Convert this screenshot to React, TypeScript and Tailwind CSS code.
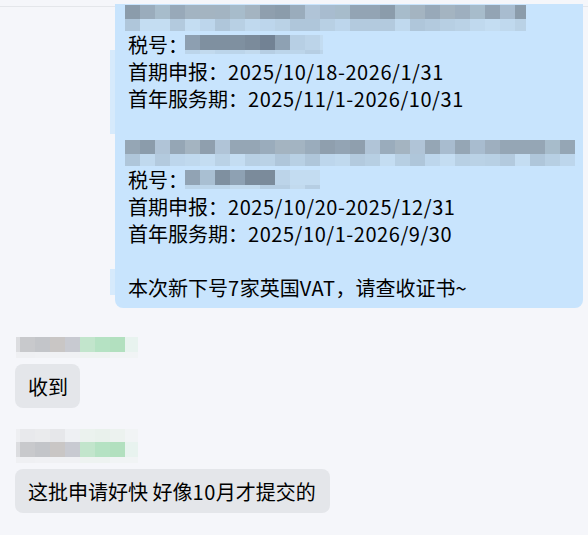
import React from "react";

type Block = { w: number; c: string };

function rand(seed: number) {
  let s = seed;
  return () => {
    s = (s * 9301 + 49297) % 233280;
    return s / 233280;
  };
}

function makeRow(total: number, block: number, seed: number, palette: string[]): Block[] {
  const r = rand(seed);
  const out: Block[] = [];
  let x = 0;
  while (x < total) {
    const w = Math.min(block, total - x);
    out.push({ w, c: palette[Math.floor(r() * palette.length)] });
    x += w;
  }
  return out;
}

const dark = ["#9eafbf", "#98a9b9", "#a3b4c2", "#a7bccb", "#8f9fae", "#93a4b4", "#a8bccf", "#8b9cab", "#95a6b5", "#a4b4c1", "#9aacbc", "#b0c4d7"];
const light = ["#b7cfe3", "#bdd6ec", "#b8d0e4", "#c0d9ee", "#b3cade", "#bad2e6", "#c4ddf2", "#afc6da"];
const taxDark = ["#8d9fb1", "#7f90a0", "#728294", "#8ea1b3", "#7b8b9b", "#91a3b4", "#a9bfd2"];

function MosaicRow({ blocks, h }: { blocks: Block[]; h: number }) {
  return (
    <div className="flex">
      {blocks.map((b, i) => (
        <div key={i} style={{ width: b.w, height: h, backgroundColor: b.c }} />
      ))}
    </div>
  );
}

function BigMosaic({ width, seed }: { width: number; seed: number }) {
  return (
    <div className="flex h-[27px] flex-col justify-center">
      <MosaicRow blocks={makeRow(width, 15, seed, dark)} h={14} />
      <MosaicRow blocks={makeRow(width, 15, seed + 7, light)} h={12} />
    </div>
  );
}

function TaxLine({ seed, w1, w2 }: { seed: number; w1: number; w2: number }) {
  return (
    <div className="flex h-[27px] items-center">
      <span>税号：</span>
      <div className="ml-[-3px] flex flex-col">
        <MosaicRow
          blocks={[
            ...makeRow(w1, 15, seed, taxDark),
            ...makeRow(w2, 15, seed + 3, ["#b7cfe4", "#c3dcf1", "#bcd4e9"]),
          ]}
          h={15}
        />
        <MosaicRow blocks={makeRow(w1 + w2, 15, seed + 5, ["#bcd5ea", "#c2daee", "#b6cee3"])} h={4} />
      </div>
    </div>
  );
}

function NameMosaic({ twoRows }: { twoRows?: boolean }) {
  return (
    <div className="ml-[16px] flex flex-col">
      {twoRows && (
        <MosaicRow
          blocks={[
            { w: 4, c: "#eeeff2" },
            { w: 15, c: "#e8e9ec" },
            { w: 15, c: "#eaebed" },
            { w: 15, c: "#e6e7ea" },
            { w: 15, c: "#eef0f3" },
            { w: 15, c: "#ebf2ee" },
            { w: 15, c: "#e9f1ec" },
            { w: 15, c: "#ecf2ef" },
            { w: 13, c: "#f1f4f5" },
          ]}
          h={13}
        />
      )}
      <MosaicRow
        blocks={[
          { w: 4, c: "#dcdde0" },
          { w: 15, c: "#c8c9cc" },
          { w: 15, c: "#c3c5c9" },
          { w: 15, c: "#c9c6c5" },
          { w: 15, c: "#c8cad1" },
          { w: 15, c: "#c2e5cc" },
          { w: 15, c: "#b5e2c3" },
          { w: 15, c: "#b2e0bf" },
          { w: 13, c: "#e8f3ef" },
        ]}
        h={15}
      />
      <MosaicRow
        blocks={[
          { w: 19, c: "#eff0f3" },
          { w: 45, c: "#f0f1f4" },
          { w: 30, c: "#eef3f1" },
          { w: 28, c: "#f1f4f5" },
        ]}
        h={6}
      />
    </div>
  );
}

function N({ children }: { children: React.ReactNode }) {
  return <span className="tracking-[0.55px]">{children}</span>;
}

export default function App() {
  return (
    <div
      className="relative h-[535px] w-[588px] overflow-hidden bg-[#f5f6fa] text-[20px] leading-[27px] text-black"
      style={{ fontFamily: '"Noto Sans CJK SC", "Noto Sans", sans-serif' }}
    >
      <div className="h-[6px]" />
      <div className="h-px bg-[#e4e6ea]" />
      <div className="relative ml-[115px] w-[468px] rounded-b-[8px] bg-[#c8e4fd] pb-[7px] pl-[13px]">
        <div className="absolute left-[-5px] top-[46px] h-[84px] w-[5px] bg-[#d6eafc]" />
        <div className="absolute left-[-5px] top-[265px] h-[26px] w-[5px] bg-[#d6eafc]" />
        <div className="mt-[-3px]">
          <div className="ml-[-3px]">
            <BigMosaic width={401} seed={11} />
          </div>
          <TaxLine seed={21} w1={105} w2={33} />
          <div className="h-[27px] whitespace-nowrap">
            首期申报：<N>2025/10/18-2026/1/31</N>
          </div>
          <div className="h-[27px] whitespace-nowrap">
            首年服务期：<N>2025/11/1-2026/10/31</N>
          </div>
          <div className="h-[27px]" />
          <div className="ml-[-3px]">
            <BigMosaic width={450} seed={37} />
          </div>
          <TaxLine seed={41} w1={90} w2={45} />
          <div className="h-[27px] whitespace-nowrap">
            首期申报：<N>2025/10/20-2025/12/31</N>
          </div>
          <div className="h-[27px] whitespace-nowrap">
            首年服务期：<N>2025/10/1-2026/9/30</N>
          </div>
          <div className="h-[27px]" />
          <div className="h-[27px] whitespace-nowrap">
            本次新下号<N>7</N>家英国<N>VAT</N>，请查收证书~
          </div>
        </div>
      </div>

      <div className="mt-[29px]">
        <NameMosaic />
      </div>
      <div className="ml-[15px] mt-[6px] flex h-[44px] w-fit items-center rounded-[8px] bg-[#e4e6ea] pl-[13px] pr-[12px]">
        收到
      </div>

      <div className="mt-[21px]">
        <NameMosaic twoRows />
      </div>
      <div className="ml-[15px] mt-[6px] flex h-[44px] w-fit items-center whitespace-nowrap rounded-[8px] bg-[#e4e6ea] pl-[13px] pr-[14px]">
        这批申请好快 好像<N>10</N>月才提交的
      </div>
    </div>
  );
}
